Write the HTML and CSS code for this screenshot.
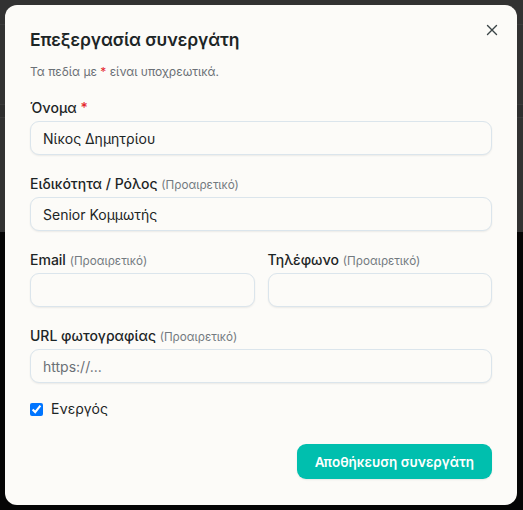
FILE: index.html
```html
<!DOCTYPE html>
<html lang="el">
<head>
<meta charset="utf-8">
<link rel="stylesheet" href="styles.css">
</head>
<body>
<div class="modal">
  <button class="close" aria-label="Κλείσιμο">
    <svg width="12" height="12" viewBox="0 0 12 12"><path d="M1.5 1.5 L10.5 10.5 M10.5 1.5 L1.5 10.5" stroke="#3b4447" stroke-width="1.4" stroke-linecap="round" fill="none"/></svg>
  </button>
  <h2 class="title">Επεξεργασία συνεργάτη</h2>
  <p class="hint">Τα πεδία με <span class="req">*</span> είναι υποχρεωτικά.</p>
  <form class="form">
    <div class="field">
      <label class="label">Όνομα <span class="req">*</span></label>
      <input class="input" type="text" value="Νίκος Δημητρίου">
    </div>
    <div class="field">
      <label class="label">Ειδικότητα / Ρόλος <span class="opt">(Προαιρετικό)</span></label>
      <input class="input" type="text" value="Senior Κομμωτής">
    </div>
    <div class="row">
      <div class="field">
        <label class="label">Email <span class="opt">(Προαιρετικό)</span></label>
        <input class="input" type="email" value="">
      </div>
      <div class="field">
        <label class="label">Τηλέφωνο <span class="opt">(Προαιρετικό)</span></label>
        <input class="input" type="tel" value="">
      </div>
    </div>
    <div class="field">
      <label class="label">URL φωτογραφίας <span class="opt">(Προαιρετικό)</span></label>
      <input class="input" type="text" placeholder="https://...">
    </div>
    <label class="check"><input type="checkbox" checked> <span>Ενεργός</span></label>
    <div class="actions">
      <button type="button" class="save">Αποθήκευση συνεργάτη</button>
    </div>
  </form>
</div>
</body>
</html>
```
FILE: styles.css
```css
html, body {
  margin: 0;
  padding: 0;
}
body {
  width: 523px;
  height: 510px;
  overflow: hidden;
  font-family: Inter, "Noto Sans", sans-serif;
  background: linear-gradient(to bottom,
    #323232 0, #323232 24px,
    #3b3b3b 24px, #3b3b3b 25px,
    #323232 25px, #323232 104px,
    #3a3a3a 104px, #3a3a3a 105px,
    #2e2e2e 105px, #2e2e2e 117px,
    #3a3a3a 117px, #3a3a3a 118px,
    #323232 118px, #323232 232px,
    #050505 232px, #050505 100%);
  padding: 5px 6px 5px 5px;
  box-sizing: border-box;
}
.modal {
  position: relative;
  width: 512px;
  height: 500px;
  box-sizing: border-box;
  background: #fcfbf8;
  border-radius: 12px;
  padding: 21px 25px 26px 25px;
  display: flex;
  flex-direction: column;
}
.close {
  position: absolute;
  top: 19px;
  right: 19px;
  width: 12px;
  height: 12px;
  padding: 0;
  border: 0;
  background: none;
  display: flex;
}
.title {
  margin: 0;
  font-size: 17.5px;
  line-height: 28px;
  font-weight: 600;
  color: #1c2526;
  letter-spacing: -0.1px;
}
.hint {
  margin: 10px 0 0;
  font-size: 12px;
  line-height: 16px;
  color: #6b7076;
}
.req {
  color: #e5262d;
}
.form {
  margin-top: 19px;
  display: flex;
  flex-direction: column;
  flex: 1;
}
.field {
  display: flex;
  flex-direction: column;
  gap: 4px;
  margin-bottom: 20px;
}
.row {
  display: grid;
  grid-template-columns: 1fr 1fr;
  gap: 13px;
}
.label {
  display: block;
  height: 18px;
  font-size: 14px;
  line-height: 18px;
  font-weight: 500;
  color: #1c2526;
  white-space: nowrap;
}
.opt {
  font-size: 11.7px;
  font-weight: 400;
  color: #737a80;
}
.input {
  box-sizing: border-box;
  height: 34px;
  width: 100%;
  border: 1px solid #dbe5ec;
  border-radius: 9px;
  background: #fcfbf8;
  box-shadow: 0 1px 2px rgba(0, 0, 0, 0.07);
  padding: 0 12px;
  font-family: Inter, "Noto Sans", sans-serif;
  font-size: 14px;
  color: #1c2526;
  outline: none;
}
.input::placeholder {
  color: #6b7076;
}
.check {
  display: flex;
  align-items: center;
  gap: 8px;
  height: 14px;
  margin-top: -1px;
  font-size: 14px;
  line-height: 14px;
  color: #1c2526;
}
.check input {
  margin: 0;
  width: 13px;
  height: 13px;
}
.actions {
  margin-top: auto;
  display: flex;
  justify-content: flex-end;
}
.save {
  height: 35px;
  padding: 0 18px;
  border: 0;
  border-radius: 9px;
  background: #00bfae;
  color: #fff;
  font-family: Inter, "Noto Sans", sans-serif;
  font-size: 13.5px;
  font-weight: 600;
  box-shadow: 0 1px 2px rgba(0, 0, 0, 0.08);
}
```
